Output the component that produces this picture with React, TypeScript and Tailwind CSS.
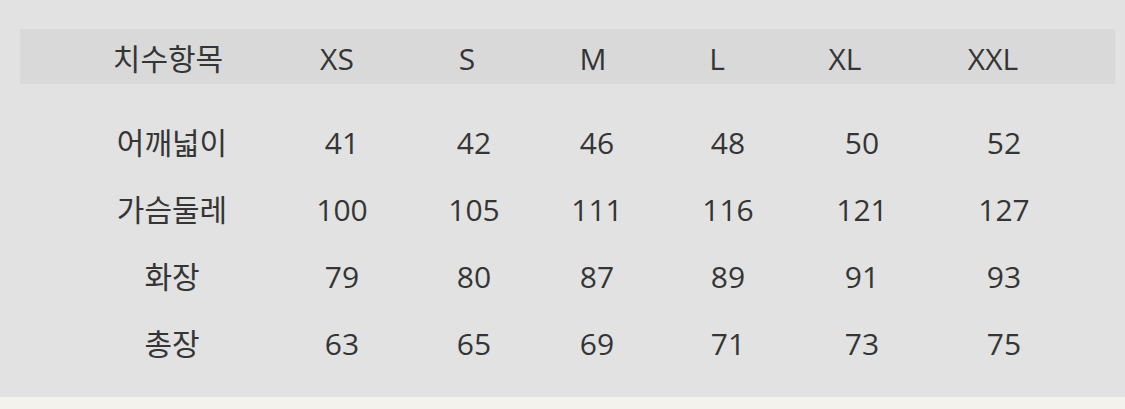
import React from 'react';

const sizes = ['XS', 'S', 'M', 'L', 'XL', 'XXL'];

const rows = [
  { label: '어깨넓이', values: ['41', '42', '46', '48', '50', '52'] },
  { label: '가슴둘레', values: ['100', '105', '111', '116', '121', '127'] },
  { label: '화장', values: ['79', '80', '87', '89', '91', '93'] },
  { label: '총장', values: ['63', '65', '69', '71', '73', '75'] },
];

// column widths picked so the centred text lands where the original table has it
const headWidths = ['w-[190px]', 'w-[148px]', 'w-[112px]', 'w-[140px]', 'w-[108px]', 'w-[148px]', 'w-[148px]'];
const bodyWidths = ['w-[190px]', 'w-[150px]', 'w-[114px]', 'w-[132px]', 'w-[130px]', 'w-[138px]', 'w-[146px]'];

const App = () => {
  return (
    <div
      className="w-[1125px] h-[409px] flex flex-col bg-[#e2e2e2] text-[#353535] text-[30px] leading-none"
      style={{ fontFamily: '"Open Sans", "Noto Sans CJK KR", sans-serif' }}
    >
      <div className="flex-1 pt-[29px] pl-[20px] pr-[10px]">
        {/* Header */}
        <div className="flex items-center h-[55px] bg-[#d9d9d9] pl-[53px] pt-[5px]">
          <div className={`${headWidths[0]} shrink-0 text-center`}>치수항목</div>
          {sizes.map((s, i) => (
            <div key={s} className={`${headWidths[i + 1]} shrink-0 text-center`}>
              {s}
            </div>
          ))}
        </div>

        {/* Measurements */}
        <div className="flex flex-col pt-[44px] gap-[37px] pl-[57px]">
          {rows.map((row) => (
            <div key={row.label} className="flex items-center h-[30px]">
              <div className={`${bodyWidths[0]} shrink-0 text-center`}>{row.label}</div>
              {row.values.map((v, i) => (
                <div key={i} className={`${bodyWidths[i + 1]} shrink-0 text-center`}>
                  {v}
                </div>
              ))}
            </div>
          ))}
        </div>
      </div>
      <div className="h-[12px] bg-[#f3f2ec]" />
    </div>
  );
};

export default App;
